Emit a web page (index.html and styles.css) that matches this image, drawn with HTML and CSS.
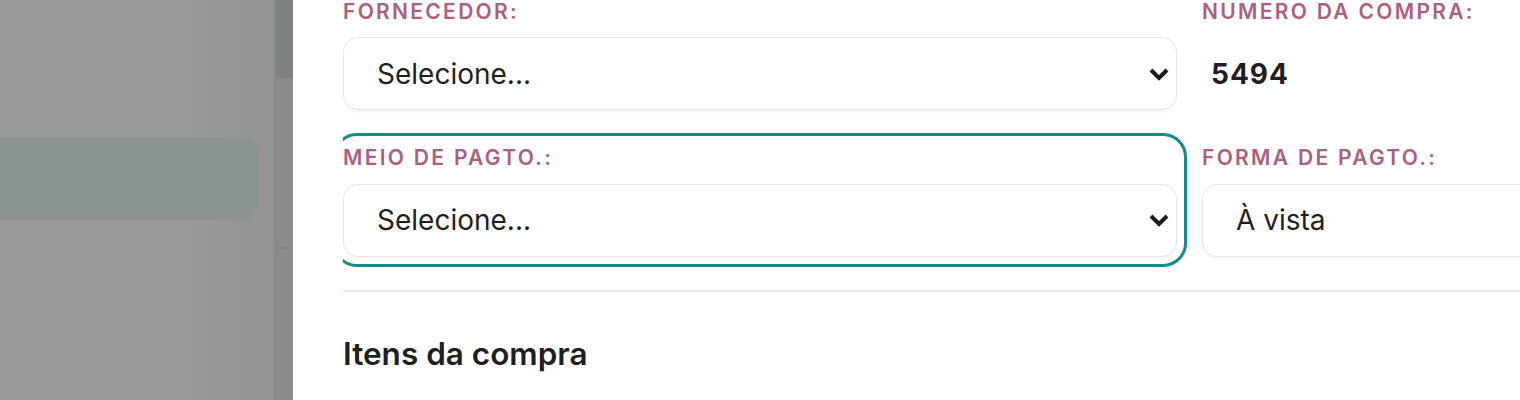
FILE: index.html
```html
<!DOCTYPE html>
<html lang="pt-BR">
<head>
    <meta charset="UTF-8">
    <meta name="viewport" content="width=device-width, initial-scale=1.0">
    <title>Nova compra</title>
    <link rel="stylesheet" href="styles.css">
</head>
<body>
    <!-- page behind the drawer, dimmed by the overlay -->
    <div class="backdrop">
        <aside class="sidebar">
            <div class="nav-item active"></div>
        </aside>
        <div class="page">
            <div class="page-header"></div>
            <div class="page-row"></div>
        </div>
    </div>

    <section class="drawer">
        <div class="drawer-body">
            <div class="form-grid">
                <div class="field">
                    <label class="field-label">Fornecedor:</label>
                    <div class="select">
                        <span class="select-text">Selecione...</span>
                        <svg class="chevron" width="20" height="14" viewBox="0 0 20 14">
                            <polyline points="2,3 10,11 18,3" fill="none" stroke="#1b1b1b" stroke-width="4"/>
                        </svg>
                    </div>
                </div>
                <div class="field">
                    <label class="field-label">Numero da compra:</label>
                    <div class="static-value">5494</div>
                </div>
                <div class="field focused">
                    <label class="field-label">Meio de pagto.:</label>
                    <div class="select">
                        <span class="select-text">Selecione...</span>
                        <svg class="chevron" width="20" height="14" viewBox="0 0 20 14">
                            <polyline points="2,3 10,11 18,3" fill="none" stroke="#1b1b1b" stroke-width="4"/>
                        </svg>
                    </div>
                </div>
                <div class="field">
                    <label class="field-label">Forma de pagto.:</label>
                    <div class="select">
                        <span class="select-text">À vista</span>
                    </div>
                </div>
            </div>
            <hr class="divider">
            <h2 class="section-title">Itens da compra</h2>
        </div>
    </section>
</body>
</html>
```

FILE: styles.css
```css
body {
    font-family: Inter, "Noto Sans", sans-serif;
    margin: 0;
    padding: 0;
    height: 400px;
    overflow: hidden;
    display: flex;
    background-color: #ffffff;
    color: #1f1f1f;
}
.backdrop {
    width: 293px;
    flex-shrink: 0;
    display: flex;
    background-color: #9a9a9a;
}
.sidebar {
    width: 276px;
    border-right: 2px solid #888888;
    background: linear-gradient(to right, #9a9a9a 65%, #939393);
    padding-top: 137px;
    padding-right: 16px;
    box-sizing: border-box;
}
.nav-item {
    height: 83px;
    border-radius: 0 15px 15px 0;
    background-color: #8a9391;
}
.page {
    flex: 1;
    background-color: #8e8c8a;
}
.page-header {
    height: 78px;
    background-color: #7e8381;
    border-bottom: 1px solid #8a8886;
}
.page-row {
    height: 168px;
    border-bottom: 2px solid #878583;
}
.drawer {
    flex: 1;
    min-width: 0;
    padding-left: 50px;
    background-color: #ffffff;
}
.drawer-body {
    overflow: hidden;
    height: 100%;
}
.form-grid {
    display: grid;
    grid-template-columns: 834px 834px;
    column-gap: 25px;
    row-gap: 33px;
    margin-top: -3px;
}
.field {
    display: flex;
    flex-direction: column;
    border-radius: 14px;
}
.field.focused {
    outline: 3.5px solid #148d84;
    outline-offset: 7px;
}
.field-label {
    font-size: 21px;
    line-height: 1.4;
    font-weight: 600;
    letter-spacing: 2.3px;
    text-transform: uppercase;
    color: #ad5f80;
    margin-bottom: 11px;
}
.select {
    height: 73px;
    box-sizing: border-box;
    border: 1.75px solid #e8e4df;
    border-radius: 15px;
    box-shadow: 0 2px 3px rgba(0,0,0,0.04);
    padding: 0 7px 0 33px;
    display: flex;
    align-items: center;
    justify-content: space-between;
    background-color: #ffffff;
}
.select-text {
    font-size: 28px;
    color: #1f1f1f;
}
.chevron {
    flex-shrink: 0;
}
.static-value {
    height: 73px;
    display: flex;
    align-items: center;
    padding-left: 9px;
    font-size: 28px;
    font-weight: 700;
    letter-spacing: 1px;
    color: #1f1f1f;
}
.divider {
    border: none;
    height: 1.75px;
    background-color: #ebe7e3;
    margin: 33px 0 0 0;
}
.section-title {
    font-size: 31.5px;
    line-height: 1.4;
    font-weight: 600;
    color: #1f1f1f;
    margin: 40px 0 0 0;
}
```
